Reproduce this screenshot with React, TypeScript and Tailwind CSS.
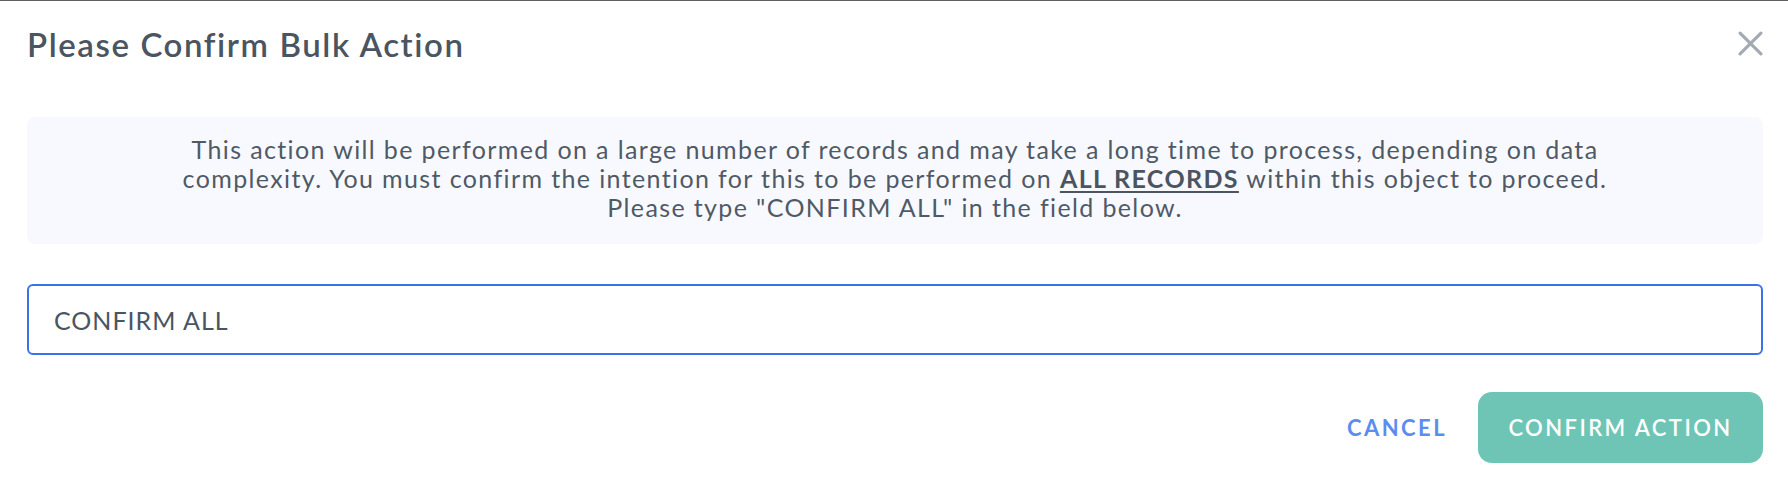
import { useState } from "react";

export default function App() {
  const [value, setValue] = useState("CONFIRM ALL");

  return (
    <div
      className="min-h-[490px] w-full border-t border-[#606060] bg-white text-[#4a5561]"
      style={{ fontFamily: "Lato, 'Open Sans', sans-serif" }}
    >
      <div className="flex flex-col pl-[27px] pr-[25px] pb-[27px]">
        <div className="flex items-start justify-between pt-[24px]">
          <h2 className="text-[33px] font-semibold leading-[38px] tracking-[0.048em] text-[#4a5561]">
            Please Confirm Bulk Action
          </h2>
          <button aria-label="Close" className="mt-[6px] text-[#a3aab3]">
            <svg width="25" height="25" viewBox="0 0 24 24" fill="none">
              <path d="M2 2 L22 22 M22 2 L2 22" stroke="currentColor" strokeWidth="3" strokeLinecap="round" />
            </svg>
          </button>
        </div>

        <div className="mt-[54px] rounded-[8px] bg-[#f8f9fe] px-8 pt-[18px] pb-[22px] text-center text-[25px] leading-[29px] tracking-[0.055em] text-[#4f5a66]">
          This action will be performed on a large number of records and may take a long time to process, depending on data
          <br />
          complexity. You must confirm the intention for this to be performed on{" "}
          <span className="font-bold text-[#4a5561] underline underline-offset-[3px]">ALL RECORDS</span> within this object to proceed.
          <br />
          Please type "CONFIRM ALL" in the field below.
        </div>

        <input
          autoFocus
          value={value}
          onChange={(e) => setValue(e.target.value)}
          className="mt-[40px] h-[71px] w-full rounded-[6px] border-2 border-[#3b72e8] bg-white px-[25px] text-[25px] tracking-[0.04em] text-[#4a5561] caret-[#4a5561] outline-none"
        />

        <div className="mt-[37px] flex items-center justify-end gap-[31px]">
          <button className="text-[22px] font-bold tracking-[0.11em] text-[#5b8def]">CANCEL</button>
          <button className="h-[71px] w-[285px] rounded-[14px] bg-[#6fc5b5] text-[22px] font-semibold tracking-[0.11em] text-white">
            CONFIRM ACTION
          </button>
        </div>
      </div>
    </div>
  );
}
